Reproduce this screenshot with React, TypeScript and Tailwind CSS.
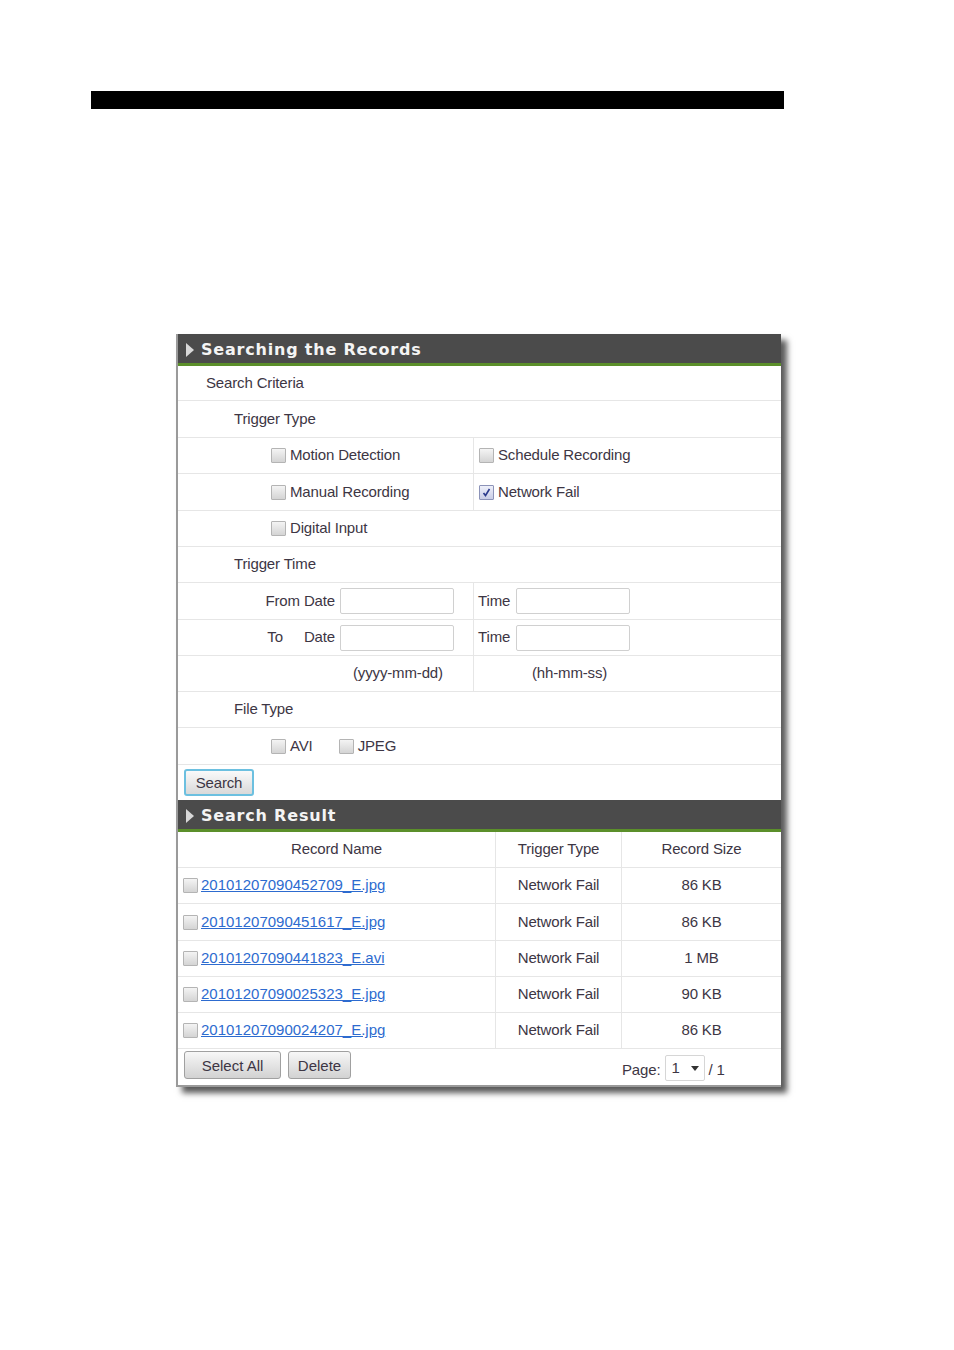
import React from "react";

const font = { fontFamily: '"Liberation Sans", Arial, sans-serif' };

function Box({ checked = false }: { checked?: boolean }) {
  return (
    <span
      className={`inline-flex items-center justify-center w-[15px] h-[15px] border rounded-[1px] ${
        checked ? "bg-gradient-to-b from-[#eef0fa] to-[#c9cde6] border-[#8c93b8]" : "bg-gradient-to-b from-[#f4f4f4] to-[#d4d4d4] border-[#b4b4b4]"
      }`}
    >
      {checked && (
        <svg width="11" height="11" viewBox="0 0 11 11">
          <path d="M2.5 6 L4.5 8.5 L8.5 2" stroke="#2b3a8c" strokeWidth="1.6" fill="none" />
        </svg>
      )}
    </span>
  );
}

function Header({ title }: { title: string }) {
  return (
    <div>
      <div className="h-[29px] bg-[#4b4b4b] flex items-center pl-[8px] pt-[2px]">
        <svg width="8" height="14" viewBox="0 0 8 14" className="mr-[7px]">
          <path d="M0 0 L8 7 L0 14 Z" fill="#d8d8d8" />
        </svg>
        <span
          className="text-[#f4f4f4] text-[16px] font-bold tracking-[0.8px]"
          style={{ fontFamily: '"DejaVu Sans", Verdana, sans-serif' }}
        >
          {title}
        </span>
      </div>
      <div className="h-[3px] bg-[#5b8f2a]" />
    </div>
  );
}

const row = "border-b border-[#e6e6e6] flex items-center";
const txt = "text-[15px] text-[#3d3644] tracking-[-0.15px]";

function Input() {
  return <span className="inline-block w-[114px] h-[26px] border border-[#d0d0d0] rounded-[2px] bg-white" />;
}

const records = [
  ["20101207090452709_E.jpg", "86 KB"],
  ["20101207090451617_E.jpg", "86 KB"],
  ["20101207090441823_E.avi", "1 MB"],
  ["20101207090025323_E.jpg", "90 KB"],
  ["20101207090024207_E.jpg", "86 KB"],
];

export default function App() {
  return (
    <div className="w-[954px] h-[1350px] bg-white overflow-hidden" style={font}>
      <div className="pt-[91px] pl-[91px]">
        <div className="w-[693px] h-[18px] bg-black" />
      </div>
      <div className="mt-[225px] ml-[176px] w-[605px] border-l-2 border-b-2 border-[#9a9a9a] bg-white shadow-[6px_6px_6px_rgba(0,0,0,0.65)]">
        <Header title="Searching the Records" />
        <div className={`${row} h-[35px] pl-[28px]`}>
          <span className={txt}>Search Criteria</span>
        </div>
        <div className={`${row} h-[37px] pl-[56px]`}>
          <span className={txt}>Trigger Type</span>
        </div>
        <div className={`${row} h-[36px]`}>
          <div className="w-[296px] h-full flex items-center pl-[93px] border-r border-[#e6e6e6]">
            <Box />
            <span className={`${txt} ml-[4px]`}>Motion Detection</span>
          </div>
          <div className="flex items-center pl-[5px]">
            <Box />
            <span className={`${txt} ml-[4px]`}>Schedule Recording</span>
          </div>
        </div>
        <div className={`${row} h-[37px]`}>
          <div className="w-[296px] h-full flex items-center pl-[93px] border-r border-[#e6e6e6]">
            <Box />
            <span className={`${txt} ml-[4px]`}>Manual Recording</span>
          </div>
          <div className="flex items-center pl-[5px]">
            <Box checked />
            <span className={`${txt} ml-[4px]`}>Network Fail</span>
          </div>
        </div>
        <div className={`${row} h-[36px] pl-[93px]`}>
          <Box />
          <span className={`${txt} ml-[4px]`}>Digital Input</span>
        </div>
        <div className={`${row} h-[36px] pl-[56px]`}>
          <span className={txt}>Trigger Time</span>
        </div>
        <div className={`${row} h-[37px]`}>
          <div className="w-[296px] h-full flex items-center justify-end pr-[19px] border-r border-[#e6e6e6]">
            <span className={`${txt} mr-[5px]`}>From Date</span>
            <Input />
          </div>
          <div className="flex items-center pl-[4px]">
            <span className={`${txt} mr-[6px]`}>Time</span>
            <Input />
          </div>
        </div>
        <div className={`${row} h-[36px]`}>
          <div className="w-[296px] h-full flex items-center justify-end pr-[19px] border-r border-[#e6e6e6]">
            <span className={txt}>To</span>
            <span className={`${txt} ml-[21px] mr-[5px]`}>Date</span>
            <Input />
          </div>
          <div className="flex items-center pl-[4px]">
            <span className={`${txt} mr-[6px]`}>Time</span>
            <Input />
          </div>
        </div>
        <div className={`${row} h-[36px]`}>
          <div className="w-[296px] h-full flex items-center pl-[175px] border-r border-[#e6e6e6]">
            <span className={`${txt} whitespace-nowrap`}>(yyyy-mm-dd)</span>
          </div>
          <div className="flex items-center pl-[58px]">
            <span className={txt}>(hh-mm-ss)</span>
          </div>
        </div>
        <div className={`${row} h-[36px] pl-[56px]`}>
          <span className={txt}>File Type</span>
        </div>
        <div className={`${row} h-[37px] pl-[93px]`}>
          <Box />
          <span className={`${txt} ml-[4px]`}>AVI</span>
          <span className="ml-[26px]" />
          <Box />
          <span className={`${txt} ml-[4px]`}>JPEG</span>
        </div>
        <div className="h-[35px] flex items-center pl-[6px]">
          <button className="w-[70px] h-[27px] rounded-[3px] border-2 border-[#6cc0e0] bg-gradient-to-b from-[#fafafa] to-[#d9d9d9] text-[15px] text-[#3d3644] tracking-[-0.15px] leading-none">
            Search
          </button>
        </div>
        <Header title="Search Result" />
        <div className={`${row} h-[36px]`}>
          <div className="w-[318px] h-full flex items-center justify-center border-r border-[#e6e6e6]">
            <span className={txt}>Record Name</span>
          </div>
          <div className="w-[126px] h-full flex items-center justify-center border-r border-[#e6e6e6]">
            <span className={txt}>Trigger Type</span>
          </div>
          <div className="flex-1 h-full flex items-center justify-center">
            <span className={txt}>Record Size</span>
          </div>
        </div>
        {records.map(([name, size], i) => (
          <div key={i} className={`${row} ${i === 1 ? "h-[37px]" : "h-[36px]"}`}>
            <div className="w-[318px] h-full flex items-center pl-[5px] border-r border-[#e6e6e6]">
              <Box />
              <span className="ml-[3px] text-[15px] text-[#2d6bcf] underline">{name}</span>
            </div>
            <div className="w-[126px] h-full flex items-center justify-center border-r border-[#e6e6e6]">
              <span className={txt}>Network Fail</span>
            </div>
            <div className="flex-1 h-full flex items-center justify-center">
              <span className={txt}>{size}</span>
            </div>
          </div>
        ))}
        <div className="h-[36px] flex items-start pt-[2px] pl-[6px]">
          <button className="w-[97px] h-[28px] rounded-[3px] border border-[#a0a0a0] bg-gradient-to-b from-[#f7f7f7] to-[#d2d2d2] text-[15px] text-[#3d3644] leading-none">
            Select All
          </button>
          <button className="ml-[7px] w-[63px] h-[28px] rounded-[3px] border border-[#a0a0a0] bg-gradient-to-b from-[#f7f7f7] to-[#d2d2d2] text-[15px] text-[#3d3644] leading-none">
            Delete
          </button>
          <span className={`${txt} ml-[271px] mt-[8px]`}>Page:</span>
          <span className="ml-[5px] mt-[4px] w-[40px] h-[26px] border border-[#d6d6d6] rounded-[2px] flex items-center justify-between px-[5px]">
            <span className={txt}>1</span>
            <svg width="8" height="5" viewBox="0 0 8 5">
              <path d="M0 0 L8 0 L4 5 Z" fill="#333" />
            </svg>
          </span>
          <span className={`${txt} ml-[3px] mt-[8px]`}>/ 1</span>
        </div>
      </div>
    </div>
  );
}
